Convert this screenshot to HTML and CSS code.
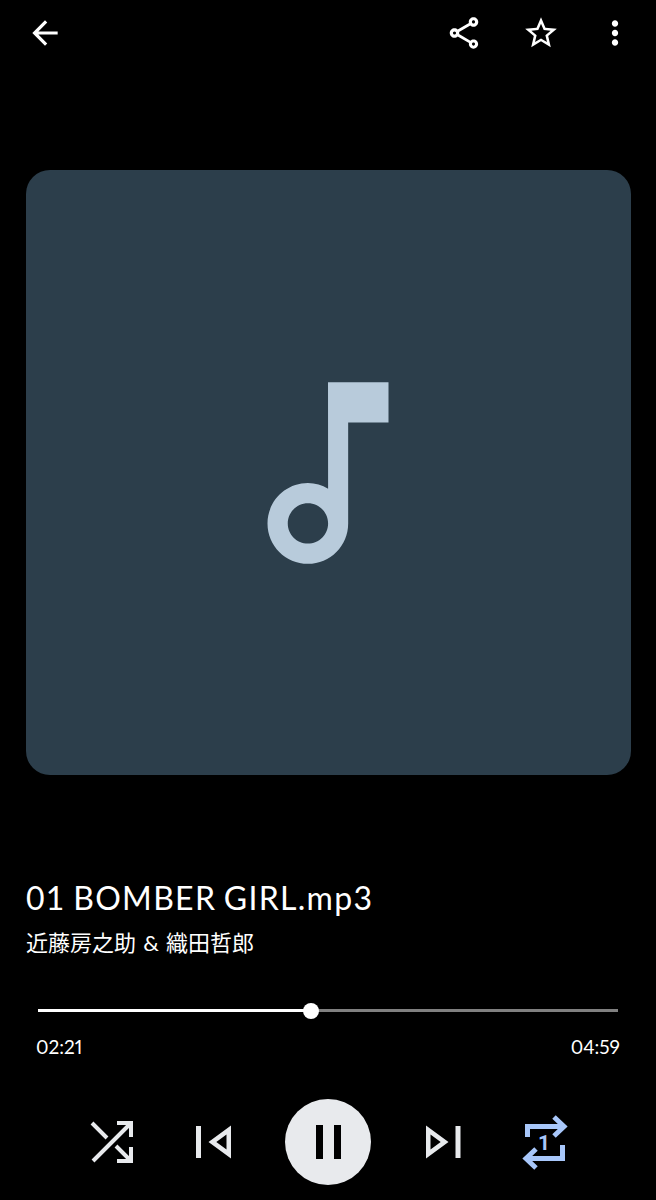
FILE: index.html
```html
<!DOCTYPE html>
<html lang="en">
<head>
  <meta charset="UTF-8">
  <meta name="viewport" content="width=device-width, initial-scale=1.0">
  <title>Music Player</title>
  <link rel="stylesheet" href="styles.css">
</head>
<body>
  <div class="player">
    <div class="topbar">
      <svg class="top-icon" viewBox="0 0 24 24"><path d="M20 11H7.83l5.59-5.59L12 4l-8 8 8 8 1.41-1.41L7.83 13H20v-2z"/></svg>
      <div class="top-actions">
        <svg class="top-icon" viewBox="0 0 24 24"><path d="M18 16.08c-.76 0-1.44.3-1.96.77L8.91 12.7c.05-.23.09-.46.09-.7s-.04-.47-.09-.7l7.05-4.11c.54.5 1.25.81 2.04.81 1.66 0 3-1.34 3-3s-1.34-3-3-3-3 1.34-3 3c0 .24.04.47.09.7L8.04 9.81C7.5 9.31 6.79 9 6 9c-1.66 0-3 1.34-3 3s1.34 3 3 3c.79 0 1.5-.31 2.04-.81l7.12 4.16c-.05.21-.08.43-.08.65 0 1.61 1.31 2.92 2.92 2.92 1.61 0 2.92-1.31 2.92-2.92s-1.31-2.92-2.92-2.92zM18 4c.55 0 1 .45 1 1s-.45 1-1 1-1-.45-1-1 .45-1 1-1zM6 13c-.55 0-1-.45-1-1s.45-1 1-1 1 .45 1 1-.45 1-1 1zm12 7.02c-.55 0-1-.45-1-1s.45-1 1-1 1 .45 1 1-.45 1-1 1z"/></svg>
        <svg class="top-icon" viewBox="0 0 24 24"><path d="M22 9.24l-7.19-.62L12 2 9.19 8.63 2 9.24l5.46 4.73L5.82 21 12 17.27 18.18 21l-1.63-7.03L22 9.24zM12 15.4l-3.76 2.27 1-4.28-3.32-2.88 4.38-.38L12 6.1l1.71 4.04 4.38.38-3.32 2.88 1 4.28L12 15.4z"/></svg>
        <svg class="top-icon" viewBox="0 0 24 24"><path d="M12 8c1.1 0 2-.9 2-2s-.9-2-2-2-2 .9-2 2 .9 2 2 2zm0 2c-1.1 0-2 .9-2 2s.9 2 2 2 2-.9 2-2-.9-2-2-2zm0 6c-1.1 0-2 .9-2 2s.9 2 2 2 2-.9 2-2-.9-2-2-2z"/></svg>
      </div>
    </div>

    <div class="artwork">
      <svg class="note" viewBox="0 0 24 24"><path d="M12 3l.01 10.55c-.59-.34-1.27-.55-2-.55C7.79 13 6 14.79 6 17s1.79 4 4.01 4S14 19.21 14 17V7h4V3h-6zm-1.99 16c-1.1 0-2-.9-2-2s.9-2 2-2 2 .9 2 2-.9 2-2 2z"/></svg>
    </div>

    <div class="track-info">
      <div class="title">01 BOMBER GIRL.mp3</div>
      <div class="artist">近藤房之助 &amp; 織田哲郎</div>
    </div>

    <div class="slider">
      <div class="played" style="width: 47.1%"></div>
      <div class="thumb" style="left: 47.1%"></div>
    </div>
    <div class="times">
      <span>02:21</span>
      <span>04:59</span>
    </div>

    <div class="controls">
      <svg class="ctrl" viewBox="0 0 64 64"><path class="shuffle-line" d="M37 13H51V27M13 51L51 13M37 51H51V37M36 36L51 51M12 13L27 28"/></svg>
      <svg class="ctrl" viewBox="0 0 64 64"><path fill-rule="evenodd" d="M14 16h5v32h-5zM49 15.500L26.500 32 49 48.500zM44.500 24.500V39.500L34.300 32z"/></svg>
      <div class="pause">
        <span class="pause-bar"></span>
        <span class="pause-bar"></span>
      </div>
      <svg class="ctrl" viewBox="0 0 64 64"><path fill-rule="evenodd" d="M46.500 16h5v32h-5zM17 15.500L39.500 32 17 48.500zM21.500 24.500V39.500L31.700 32z"/></svg>
      <svg class="ctrl repeat" viewBox="0 0 64 64">
        <path class="repeat-line" d="M16.500 27V16.500H53M43 7L53 16.500 43 26M51.500 35V48.500H15M25 39L15 48.500 25 58"/>
        <text class="repeat-num" x="33" y="40">1</text>
      </svg>
    </div>
  </div>
</body>
</html>
```

FILE: styles.css
```css
body {
  margin: 0;
  background: #000;
  color: #fff;
  font-family: Lato, "Noto Sans CJK JP", sans-serif;
}
.player {
  width: 656px;
  height: 1200px;
  overflow: hidden;
}
.topbar {
  display: flex;
  justify-content: space-between;
  padding: 14px 22px 14px 26px;
}
.top-actions {
  display: flex;
  gap: 36px;
}
.top-actions svg:first-child {
  margin-right: 3px;
}
.top-icon {
  width: 38px;
  height: 38px;
  fill: #fff;
}
.artwork {
  display: flex;
  align-items: center;
  justify-content: center;
  width: 605px;
  height: 605px;
  margin: 104px 0 0 25.500px;
  background: #2c3e4b;
  border-radius: 24px;
}
.note {
  width: 242px;
  height: 242px;
  fill: #b8cbdb;
}
.track-info {
  margin: 103px 0 0 26px;
}
.title {
  font-size: 32px;
  line-height: 40px;
  letter-spacing: 1.300px;
  word-spacing: -2px;
}
.artist {
  margin-top: 11px;
  font-size: 22px;
  line-height: 28px;
  word-spacing: 1.500px;
}
.slider {
  position: relative;
  height: 3px;
  margin: 52px 38px 0;
  background: #808080;
}
.played {
  height: 100%;
  background: #fff;
}
.thumb {
  position: absolute;
  top: -6.500px;
  width: 16px;
  height: 16px;
  margin-left: -8px;
  background: #fff;
  border-radius: 50%;
}
.times {
  display: flex;
  justify-content: space-between;
  margin: 23px 36px 0;
  font-size: 19px;
  line-height: 24px;
  font-variant-numeric: proportional-nums;
}
.controls {
  display: flex;
  align-items: center;
  gap: 38px;
  margin-top: 40px;
  padding-left: 80px;
}
.ctrl {
  width: 64px;
  height: 64px;
  fill: #e8eaed;
  overflow: visible;
}
.shuffle-line {
  fill: none;
  stroke: #e8eaed;
  stroke-width: 4;
}
.pause {
  display: flex;
  align-items: center;
  justify-content: center;
  gap: 11px;
  width: 86px;
  height: 86px;
  margin-left: 1px;
  background: #e8eaed;
  border-radius: 50%;
}
.pause-bar {
  width: 7px;
  height: 34px;
  background: #000;
}
.repeat-line {
  fill: none;
  stroke: #a8c7fa;
  stroke-width: 5;
}
.repeat-num {
  fill: #a8c7fa;
  font-family: Roboto, sans-serif;
  font-size: 21px;
  font-weight: 700;
  text-anchor: middle;
}
```
